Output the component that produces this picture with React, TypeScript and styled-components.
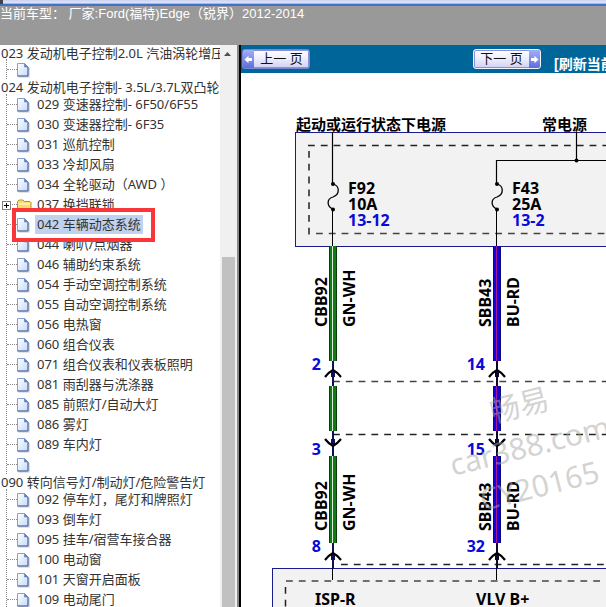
import React from "react";
import styled, { createGlobalStyle } from "styled-components";

const GlobalStyle = createGlobalStyle`
  html, body { margin: 0; height: 100%; background: #fff; }
  *, *::before, *::after { box-sizing: border-box; }
`;

const sans = `"Noto Sans", "Noto Sans CJK SC", sans-serif`;
const arial = `"Liberation Sans", "Noto Sans CJK SC", sans-serif`;

const Page = styled.div`
  display: flex;
  flex-direction: column;
  height: 100vh;
  overflow: hidden;
  font-family: ${sans};
  font-size: 13px;
  color: #333;
`;

const WindowEdge = styled.div`
  flex: none;
  height: 6px;
  border-bottom: 2px solid #4470c8;
  background: linear-gradient(#c8d2f2, #dde5fa 60%, #8ea6dc);

  &::before {
    content: "";
    display: block;
    width: 3px;
    height: 4px;
    background: #444;
  }
`;

const VehicleBar = styled.header`
  flex: none;
  height: 39px;
  background: #999;
  color: #fff;
  font-family: ${arial};
  font-size: 13px;
  line-height: 16px;
  white-space: pre;
`;

const Frames = styled.div`
  flex: 1;
  display: flex;
  min-height: 0;
`;

const Sidebar = styled.nav`
  flex: 0 0 241px;
  display: flex;
  min-width: 0;
  border-right: 2px solid #000;
  box-shadow: inset -2px 0 #8a8a8a;
`;

const TreePane = styled.div`
  flex: 1;
  min-width: 0;
  overflow: hidden;
`;

const ScrollTrack = styled.div`
  flex: 0 0 17px;
  margin-right: 2px;
  display: flex;
  flex-direction: column;
  align-items: flex-end;
  padding-right: 2px;
  background: #f0f0f0;
`;

const ScrollUp = styled.button`
  width: 15px;
  height: 17px;
  padding: 0;
  border: 0;
  background: none;
  display: grid;
  place-items: center;
  margin-bottom: 195px;
`;

const ScrollThumb = styled.div`
  flex: 1;
  width: 13px;
  background: #c1c1c1;
`;

const GroupTitle = styled.h2<{ $first?: boolean }>`
  margin: 0;
  padding-left: 1px;
  height: ${(p) => (p.$first ? 14 : 15)}px;
  line-height: 16px;
  font-size: 13px;
  font-weight: 400;
  white-space: nowrap;
`;

const Branch = styled.ul`
  margin: 0 0 0 6px;
  padding: 0;
  list-style: none;
  border-left: 1px dotted #888;
`;

const Row = styled.li`
  position: relative;
  display: flex;
  align-items: center;
  height: 20px;
`;

const Twig = styled.span`
  width: 10px;
  border-top: 1px dotted #888;
`;

const IconSlot = styled.span`
  display: flex;
  width: 18px;
  padding-top: 3px;
`;

const RowLink = styled.a<{ $selected?: boolean }>`
  padding: 0 2px;
  height: 19px;
  line-height: 19px;
  color: #333;
  text-decoration: none;
  white-space: nowrap;
  background: ${(p) => (p.$selected ? "#c1d2ee" : "transparent")};
`;

const Expander = styled.button`
  position: absolute;
  left: -5px;
  top: 7px;
  width: 9px;
  height: 9px;
  padding: 0;
  border: 1px solid #808080;
  background: #fff;
  display: grid;
  place-items: center;
`;

const Marker = styled.span`
  position: absolute;
  z-index: 1;
  left: 5px;
  top: -6px;
  width: 143px;
  height: 34px;
  border: 4px solid #fb3638;
  pointer-events: none;
`;

const Main = styled.main`
  flex: 1;
  min-width: 0;
  display: flex;
  flex-direction: column;
  background: #fff;
`;

const Toolbar = styled.div`
  flex: none;
  display: flex;
  align-items: flex-start;
  height: 28px;
  padding: 4px 0 0 1px;
  background: #069;
  overflow: hidden;
`;

const PageButton = styled.button<{ $next?: boolean }>`
  flex: none;
  display: flex;
  flex-direction: ${(p) => (p.$next ? "row-reverse" : "row")};
  align-items: stretch;
  width: 68px;
  height: 20px;
  margin-right: ${(p) => (p.$next ? 13 : 163)}px;
  padding: 0;
  overflow: hidden;
  border: 1px solid ${(p) => (p.$next ? "#f4f4ff" : "#7c86d0")};
  border-radius: 3px;
  box-shadow: inset 0 0 0 1px #8c8ede;
  background: linear-gradient(#fff, #ececfc 50%, #cfd1f6);
  color: #111;
  font-family: ${arial};
  font-size: 13px;
  line-height: 18px;
  white-space: nowrap;
`;

const ArrowBlock = styled.span`
  width: 11px;
  display: grid;
  place-items: center;
  background: linear-gradient(#a3aef6, #5c6ee0);
`;

const ButtonText = styled.span`
  flex: 1;
  text-align: center;
`;

const Refresh = styled.a`
  flex: none;
  margin-top: 5px;
  color: #fff;
  font-family: ${arial};
  font-size: 14px;
  font-weight: 700;
  line-height: 20px;
  text-decoration: none;
  white-space: nowrap;
`;

const Canvas = styled.div`
  flex: 1;
  min-height: 0;
  overflow: hidden;
`;

const Drawing = styled.svg`
  display: block;
  font-family: ${sans};
  font-size: 16px;
  font-weight: 700;
`;

type Item = { label: string; folder?: boolean; selected?: boolean };
type Group = { title: string; items: Item[] };

const groups: Group[] = [
  { title: "023 发动机电子控制2.0L 汽油涡轮增压", items: [{ label: "" }] },
  {
    title: "024 发动机电子控制- 3.5L/3.7L双凸轮轴",
    items: [
      { label: "029 变速器控制- 6F50/6F55" },
      { label: "030 变速器控制- 6F35" },
      { label: "031 巡航控制" },
      { label: "033 冷却风扇" },
      { label: "034 全轮驱动（AWD ）" },
      { label: "037 换挡联锁", folder: true },
      { label: "042 车辆动态系统", selected: true },
      { label: "044 喇叭/点烟器" },
      { label: "046 辅助约束系统" },
      { label: "054 手动空调控制系统" },
      { label: "055 自动空调控制系统" },
      { label: "056 电热窗" },
      { label: "060 组合仪表" },
      { label: "071 组合仪表和仪表板照明" },
      { label: "081 雨刮器与洗涤器" },
      { label: "085 前照灯/自动大灯" },
      { label: "086 雾灯" },
      { label: "089 车内灯" },
      { label: "" },
    ],
  },
  {
    title: "090 转向信号灯/制动灯/危险警告灯",
    items: [
      { label: "092 停车灯，尾灯和牌照灯" },
      { label: "093 倒车灯" },
      { label: "095 挂车/宿营车接合器" },
      { label: "100 电动窗" },
      { label: "101 天窗开启面板" },
      { label: "109 电动尾门" },
    ],
  },
];

const DocIcon = () => (
  <svg width="13" height="15" viewBox="0 0 13 15" aria-hidden="true">
    <defs>
      <linearGradient id="sheet" x1="0" y1="0" x2="1" y2="1">
        <stop offset="0" stopColor="#ffffff" />
        <stop offset="1" stopColor="#c4daf8" />
      </linearGradient>
    </defs>
    <path d="M1.5 14h10.5V5" fill="none" stroke="#c4c6ce" strokeWidth="1.2" />
    <path d="M.5.5h7l3.5 3.5v9H.5z" fill="url(#sheet)" stroke="#86a0d0" />
    <path d="M11 4v9H.5" fill="none" stroke="#50659c" />
    <path d="M7.5.5V4H11z" fill="#5f80bd" stroke="#5f80bd" strokeWidth=".6" />
  </svg>
);

const FolderIcon = () => (
  <svg width="15" height="13" viewBox="0 0 15 13" aria-hidden="true">
    <path d="M.5 11V2.5L2 1h4l1.5 1.5H13l1 1V11l-1 1H1.5z" fill="#f6dc72" stroke="#b8912c" />
    <path d="M1.5 5h11.5" stroke="#fff6c0" strokeWidth="1.5" />
    <path d="M1 12.4h12.5l1-1" fill="none" stroke="#8a6b1c" />
  </svg>
);

const ArrowIcon = ({ next }: { next?: boolean }) => (
  <svg width="9" height="9" viewBox="0 0 9 9" aria-hidden="true">
    <path d={next ? "M8.5 4.5L4.5 .7V3H1v3h3.5v2.3z" : "M.5 4.5L4.5 .7V3H8v3H4.5v2.3z"} fill="#fff" />
  </svg>
);

const TreeRow = ({ item }: { item: Item }) => (
  <Row>
    {item.folder && (
      <Expander type="button" aria-label={`展开 ${item.label}`}>
        <svg width="5" height="5" viewBox="0 0 5 5" aria-hidden="true">
          <path d="M0 2.5h5M2.5 0v5" stroke="#000" />
        </svg>
      </Expander>
    )}
    <Twig />
    <IconSlot>{item.folder ? <FolderIcon /> : <DocIcon />}</IconSlot>
    {item.label && (
      <RowLink href="#" $selected={item.selected}>
        {item.label}
      </RowLink>
    )}
    {item.selected && <Marker />}
  </Row>
);

const BLUE = "#0a0ad8";

const Fuse = ({ x, name, amps, page }: { x: number; name: string; amps: string; page: string }) => (
  <g>
    <path
      d={`M${x} 184C${x + 7} 186 ${x + 7} 194 ${x} 197C${x - 7} 199 ${x - 6} 207 ${x} 209`}
      fill="none"
      stroke="#000"
      strokeWidth="1.3"
    />
    <path d={`M${x - 0.5} 209V246`} stroke="#000" />
    <circle cx={x} cy="184" r="2" />
    <circle cx={x} cy="209.5" r="2" />
    <text x={x + 15} y="194">{name}</text>
    <text x={x + 15} y="210">{amps}</text>
    <text x={x + 15} y="226" fill={BLUE}>{page}</text>
  </g>
);

type WireProps = { x: number; body: string; edge: string; stripe: string; joint: string };

const Wire = ({ x, body, edge, stripe, joint }: WireProps) => (
  <g>
    <path d={`M${x} 360V386M${x} 431V456M${x} 543V568`} stroke={joint} strokeWidth="2" />
    <path d={`M${x - 0.5} 568V580`} stroke="#000" />
    <path d={`M${x} 370V377M${x} 439V446M${x} 553V560`} stroke={joint} strokeWidth="4" />
    {[
      [246, 115],
      [386, 45],
      [456, 87],
    ].map(([y, h]) => (
      <g key={y}>
        <rect x={x - 4} y={y} width="8" height={h} fill={edge} />
        <rect x={x - 3} y={y} width="6" height={h} fill={body} />
        <rect x={x - 1} y={y} width="1" height={h} fill={stripe} />
      </g>
    ))}
    <path
      d={`M${x - 8} 377Q${x - 4} 372 ${x} 370Q${x + 4} 372 ${x + 8} 377
         M${x - 8} 439Q${x - 4} 444 ${x} 446Q${x + 4} 444 ${x + 8} 439
         M${x - 8} 560Q${x - 4} 555 ${x} 553Q${x + 4} 555 ${x + 8} 560`}
      fill="none"
      stroke="#000"
      strokeWidth="2.2"
    />
  </g>
);

const VerticalText = ({ x, y, children }: { x: number; y: number; children: string }) => (
  <text transform={`translate(${x} ${y}) rotate(-90)`}>{children}</text>
);

const WiringDiagram = () => (
  <Drawing width="480" height="600" viewBox="241 73 480 600" role="img" aria-label="电路图">
    <g fill="#f2f2f2" stroke="#1a1a8c">
      <rect x="295.5" y="132.5" width="500" height="114" />
      <rect x="272.5" y="568.5" width="500" height="140" />
    </g>
    <g fill="none" stroke="#222" strokeWidth="1.5" strokeDasharray="6.8 6">
      <path d="M308 145.5H720" />
      <path d="M309 151V235" />
      <path d="M316 233.5H720" stroke="#444" />
      <path d="M333 381.5H720" stroke="#444" />
      <path d="M333 434.5H720" />
      <path d="M341 564.5H720" />
      <path d="M286 581H720" stroke="#444" />
      <path d="M285.5 587V680" />
    </g>
    <path d="M332.5 132V184M576.5 132V160.5M720 160.5H496.5V184" fill="none" stroke="#000" strokeWidth="1.2" />
    <circle cx="576.5" cy="160.5" r="2" />
    <g fontSize="15">
      <text x="296" y="130">起动或运行状态下电源</text>
      <text x="542" y="130">常电源</text>
    </g>
    <Fuse x={333} name="F92" amps="10A" page="13-12" />
    <Fuse x={497} name="F43" amps="25A" page="13-2" />
    <Wire x={333} body="#127a16" edge="#0a3c0c" stripe="#d8ecd8" joint="#101058" />
    <Wire x={497} body="#1400d8" edge="#0a0a78" stripe="#a01894" joint="#0a0a28" />
    <VerticalText x={327} y={327}>CBB92</VerticalText>
    <VerticalText x={355} y={327}>GN-WH</VerticalText>
    <VerticalText x={491} y={327}>SBB43</VerticalText>
    <VerticalText x={519} y={327}>BU-RD</VerticalText>
    <VerticalText x={327} y={531}>CBB92</VerticalText>
    <VerticalText x={355} y={531}>GN-WH</VerticalText>
    <VerticalText x={491} y={531}>SBB43</VerticalText>
    <VerticalText x={519} y={531}>BU-RD</VerticalText>
    <g fill={BLUE} textAnchor="end">
      <text x="321" y="370">2</text>
      <text x="321" y="455">3</text>
      <text x="321" y="552">8</text>
      <text x="485" y="370">14</text>
      <text x="485" y="455">15</text>
      <text x="485" y="552">32</text>
    </g>
    <text x="315" y="605">ISP-R</text>
    <text x="476" y="605">VLV B+</text>
    <g fill="#a8a8a8" fillOpacity=".5" fontSize="30" fontWeight="400">
      <text transform="translate(493 423) rotate(-14)">畅易</text>
      <text transform="translate(453 476) rotate(-14)">car388.com</text>
      <text transform="translate(483 511) rotate(-14)">CY20165</text>
    </g>
  </Drawing>
);

export default function App() {
  return (
    <Page>
      <GlobalStyle />
      <WindowEdge />
      <VehicleBar>当前车型： 厂家:Ford(福特)Edge（锐界）2012-2014</VehicleBar>
      <Frames>
        <Sidebar>
          <TreePane>
            {groups.map((group, index) => (
              <section key={group.title}>
                <GroupTitle $first={index === 0}>{group.title}</GroupTitle>
                <Branch>
                  {group.items.map((item, i) => (
                    <TreeRow key={i} item={item} />
                  ))}
                </Branch>
              </section>
            ))}
          </TreePane>
          <ScrollTrack>
            <ScrollUp type="button" aria-label="向上滚动">
              <svg width="7" height="4" viewBox="0 0 7 4" aria-hidden="true">
                <path d="M0 4L3.5 0 7 4z" fill="#505050" />
              </svg>
            </ScrollUp>
            <ScrollThumb />
          </ScrollTrack>
        </Sidebar>
        <Main>
          <Toolbar>
            <PageButton type="button">
              <ArrowBlock>
                <ArrowIcon />
              </ArrowBlock>
              <ButtonText>上一 页</ButtonText>
            </PageButton>
            <PageButton type="button" $next>
              <ArrowBlock>
                <ArrowIcon next />
              </ArrowBlock>
              <ButtonText>下一 页</ButtonText>
            </PageButton>
            <Refresh href="#">[刷新当前页]</Refresh>
          </Toolbar>
          <Canvas>
            <WiringDiagram />
          </Canvas>
        </Main>
      </Frames>
    </Page>
  );
}
